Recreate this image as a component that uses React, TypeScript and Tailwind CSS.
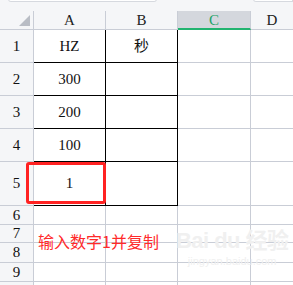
const rowH = [33, 33, 33, 33, 44, 19, 18, 20, 19, 20];
const cells: [string, string][] = [
  ["HZ", "秒"],
  ["300", ""],
  ["200", ""],
  ["100", ""],
  ["1", ""],
];

const serif = { fontFamily: '"Liberation Serif", "Noto Sans CJK SC", serif' };

export default function App() {
  return (
    <div className="relative w-[293px] h-[285px] overflow-hidden bg-white" style={serif}>
      {/* formula bar edge */}
      <div className="flex h-[11px] bg-[#f5f6f8]">
        <div className="ml-[8px] w-[149px] h-[3px] -mt-px bg-white border border-[#d6d9df] rounded-b-[3px]" />
        <div className="ml-[96px] flex-1 h-[3px] -mt-px bg-white border border-[#d6d9df] rounded-bl-[3px]" />
      </div>

      {/* column headers */}
      <div className="flex h-[19px] bg-[#f5f6f8] text-[15px] text-[#222] leading-[18px]">
        <div className="w-[34px] shrink-0 border-r border-b border-[#c9cdd6] flex items-end justify-end pr-[3px] pb-[3px]">
          <svg width="11" height="11" viewBox="0 0 11 11">
            <polygon points="0,11 11,0 11,11" fill="#b9bdc5" />
          </svg>
        </div>
        <div className="w-[72px] shrink-0 border-r border-b border-[#c9cdd6] text-center">A</div>
        <div className="w-[72px] shrink-0 border-r border-b border-[#c9cdd6] text-center">B</div>
        <div className="w-[73px] shrink-0 border-r border-[#c9cdd6] border-b-2 border-b-[#21b36f] bg-[#d4d7dd] text-center text-[#21a366]">C</div>
        <div className="flex-1 border-b border-[#c9cdd6] text-center">D</div>
      </div>

      {/* rows */}
      {rowH.map((h, i) => {
        const data = cells[i];
        const inTable = i < 5;
        return (
          <div key={i} className="flex text-[15px] text-[#111]" style={{ height: h }}>
            <div className="w-[34px] shrink-0 bg-[#f5f6f8] border-r border-b border-[#c9cdd6] flex items-center justify-center">
              {i < 9 ? i + 1 : ""}
            </div>
            <div
              className={
                inTable
                  ? "w-[72px] shrink-0 border-r border-b border-black flex items-center justify-center"
                  : "w-[72px] shrink-0 border-r border-b border-[#c9cdd6]"
              }
            >
              {data ? data[0] : ""}
            </div>
            <div
              className={
                inTable
                  ? "w-[72px] shrink-0 border-r border-b border-black flex items-center justify-center"
                  : "w-[72px] shrink-0 border-r border-b border-[#c9cdd6]"
              }
            >
              {data ? data[1] : ""}
            </div>
            <div className="w-[73px] shrink-0 border-r border-b border-[#c9cdd6]" />
            <div className="flex-1 border-b border-[#c9cdd6]" />
          </div>
        );
      })}

      {/* selection highlight on A5 */}
      <div className="absolute left-[26px] top-[162px] w-[80px] h-[42px] border-[3px] border-[#ff2222] rounded-[3px]" />

      {/* note */}
      <div
        className="absolute left-[38px] top-[231px] text-[16px] leading-[20px] text-[#ff2a2a] whitespace-nowrap"
        style={{ fontFamily: '"Noto Sans CJK SC", sans-serif' }}
      >
        输入数字1并复制
      </div>

      {/* watermark */}
      <div
        className="absolute left-[176px] top-[228px] flex flex-col items-center text-[#f0f0f0] select-none"
        style={{ fontFamily: '"Liberation Sans", "Noto Sans CJK SC", sans-serif' }}
      >
        <div className="text-[22px] font-bold leading-[26px] tracking-tight">Bai du 经验</div>
        <div className="text-[11px] leading-[14px]">jingyan.baidu.com</div>
      </div>
    </div>
  );
}
